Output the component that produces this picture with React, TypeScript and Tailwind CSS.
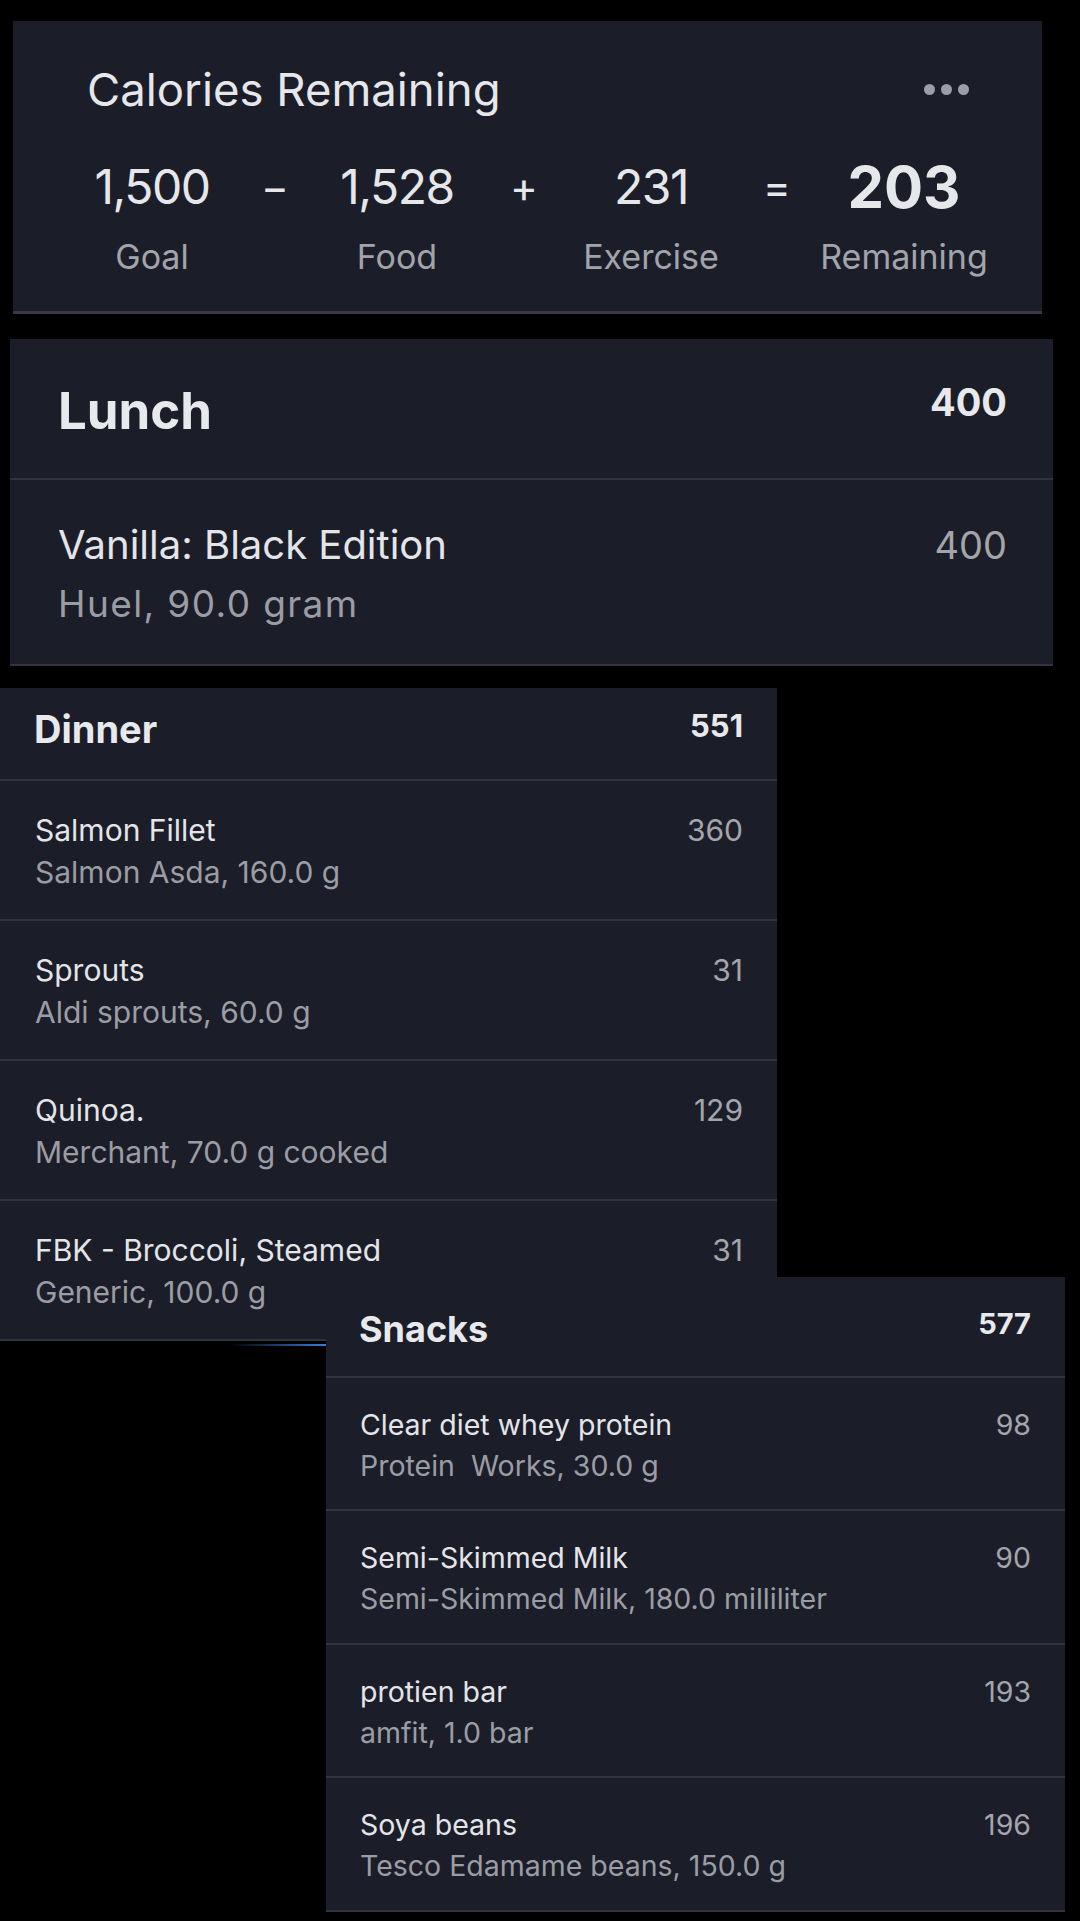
import React from 'react';

interface FoodItem {
  name: string;
  detail: string;
  calories: number;
}

const dinnerItems: FoodItem[] = [
  { name: 'Salmon Fillet', detail: 'Salmon Asda, 160.0 g', calories: 360 },
  { name: 'Sprouts', detail: 'Aldi sprouts, 60.0 g', calories: 31 },
  { name: 'Quinoa.', detail: 'Merchant, 70.0 g cooked', calories: 129 },
  { name: 'FBK - Broccoli, Steamed', detail: 'Generic, 100.0 g', calories: 31 },
];

const snackItems: FoodItem[] = [
  { name: 'Clear diet whey protein', detail: 'Protein  Works, 30.0 g', calories: 98 },
  { name: 'Semi-Skimmed Milk', detail: 'Semi-Skimmed Milk, 180.0 milliliter', calories: 90 },
  { name: 'protien bar', detail: 'amfit, 1.0 bar', calories: 193 },
  { name: 'Soya beans', detail: 'Tesco Edamame beans, 150.0 g', calories: 196 },
];

const SummaryCard: React.FC = () => {
  return (
    <div className="ml-[13px] mt-[21px] w-[1029px] bg-[#1b1e29] border-b-[3px] border-[#363a47] pt-[46px] pb-[37px]">
      <div className="flex items-center justify-between pl-[74px] pr-[73px]">
        <span className="text-[45.5px] leading-none text-[#e6e7ea]">Calories Remaining</span>
        <div className="flex gap-[6px]">
          <span className="w-[11px] h-[11px] rounded-full bg-[#9c9ea5]" />
          <span className="w-[11px] h-[11px] rounded-full bg-[#9c9ea5]" />
          <span className="w-[11px] h-[11px] rounded-full bg-[#9c9ea5]" />
        </div>
      </div>
      <div className="ml-[39px] mt-[45px] grid grid-cols-[200px_46px_198px_56px_198px_54px_200px] items-center h-[58px] text-center text-[#e6e7ea]">
        <span className="text-[48px] leading-none tracking-[-1.5px]">1,500</span>
        <span className="text-[42px] leading-none">−</span>
        <span className="text-[48px] leading-none tracking-[-1.5px]">1,528</span>
        <span className="text-[42px] leading-none">+</span>
        <span className="text-[48px] leading-none tracking-[-1.5px]">231</span>
        <span className="text-[42px] leading-none">=</span>
        <span className="text-[58px] leading-none font-bold">203</span>
      </div>
      <div className="ml-[39px] mt-[24px] grid grid-cols-[200px_46px_198px_56px_198px_54px_200px] text-center text-[34px] leading-none text-[#a2a4ab]">
        <span>Goal</span>
        <span />
        <span>Food</span>
        <span />
        <span>Exercise</span>
        <span />
        <span>Remaining</span>
      </div>
    </div>
  );
};

const LunchCard: React.FC = () => {
  return (
    <div className="ml-[10px] mt-[25px] w-[1043px] bg-[#1b1e29] border-b-2 border-[#30343f]">
      <div className="flex items-start justify-between h-[141px] pl-[48px] pr-[46px] pt-[44px] border-b-2 border-[#30343f]">
        <span className="mt-[2px] text-[51px] leading-none font-bold text-[#e8e9ec]">Lunch</span>
        <span className="text-[38px] leading-none font-bold text-[#e8e9ec]">400</span>
      </div>
      <div className="flex items-start justify-between pl-[48px] pr-[46px] pt-[45px] pb-[42px]">
        <div className="flex flex-col">
          <span className="text-[40px] leading-none text-[#e4e5e9]">Vanilla: Black Edition</span>
          <span className="mt-[20px] text-[37px] leading-none tracking-[1.4px] text-[#9b9da4]">Huel, 90.0 gram</span>
        </div>
        <span className="mt-[1px] text-[38px] leading-none text-[#a3a5ab]">400</span>
      </div>
    </div>
  );
};

const DinnerCard: React.FC = () => {
  return (
    <div className="mt-[22px] w-[777px]">
      <div className="bg-[#1b1e29]">
        <div className="flex items-start justify-between h-[93px] pl-[34px] pr-[34px] pt-[22px] border-b-2 border-[#30343f]">
          <span className="text-[38px] leading-none font-bold text-[#e8e9ec]">Dinner</span>
          <span className="text-[31px] leading-none font-bold text-[#e8e9ec]">551</span>
        </div>
        {dinnerItems.map((item) => (
          <div key={item.name} className="flex items-start justify-between pl-[35px] pr-[34px] pt-[34px] pb-[32px] border-b-2 border-[#30343f]">
            <div className="flex flex-col">
              <span className="text-[30px] leading-none text-[#e4e5e9]">{item.name}</span>
              <span className="mt-[12px] text-[30px] leading-none text-[#9b9da4]">{item.detail}</span>
            </div>
            <span className="text-[30px] leading-none text-[#a3a5ab]">{item.calories}</span>
          </div>
        ))}
      </div>
      <div className="ml-[230px] mt-[3px] w-[96px] h-[2px] bg-linear-to-r from-transparent to-[#3d7bd9]" />
    </div>
  );
};

const SnacksCard: React.FC = () => {
  return (
    <div className="relative z-10 ml-[326px] -mt-[69px] w-[739px] bg-[#1b1e29]">
      <div className="flex items-start justify-between h-[101px] pl-[33px] pr-[34px] pt-[32px] border-b-2 border-[#30343f]">
        <span className="mt-[2px] text-[36px] leading-none font-bold text-[#e8e9ec]">Snacks</span>
        <span className="text-[29px] leading-none font-bold text-[#e8e9ec]">577</span>
      </div>
      {snackItems.map((item) => (
        <div key={item.name} className="flex items-start justify-between pl-[34px] pr-[34px] pt-[33px] pb-[29px] border-b-2 border-[#30343f]">
          <div className="flex flex-col">
            <span className="text-[28.5px] leading-none text-[#e4e5e9]">{item.name}</span>
            <span className="mt-[12.5px] text-[28.5px] leading-none text-[#9b9da4] whitespace-pre">{item.detail}</span>
          </div>
          <span className="text-[28.5px] leading-none text-[#a3a5ab]">{item.calories}</span>
        </div>
      ))}
    </div>
  );
};

export default function App() {
  return (
    <div className="w-[1080px] h-[1921px] overflow-hidden bg-black font-['Inter','Noto_Sans',sans-serif] antialiased">
      <SummaryCard />
      <LunchCard />
      <DinnerCard />
      <SnacksCard />
    </div>
  );
}
